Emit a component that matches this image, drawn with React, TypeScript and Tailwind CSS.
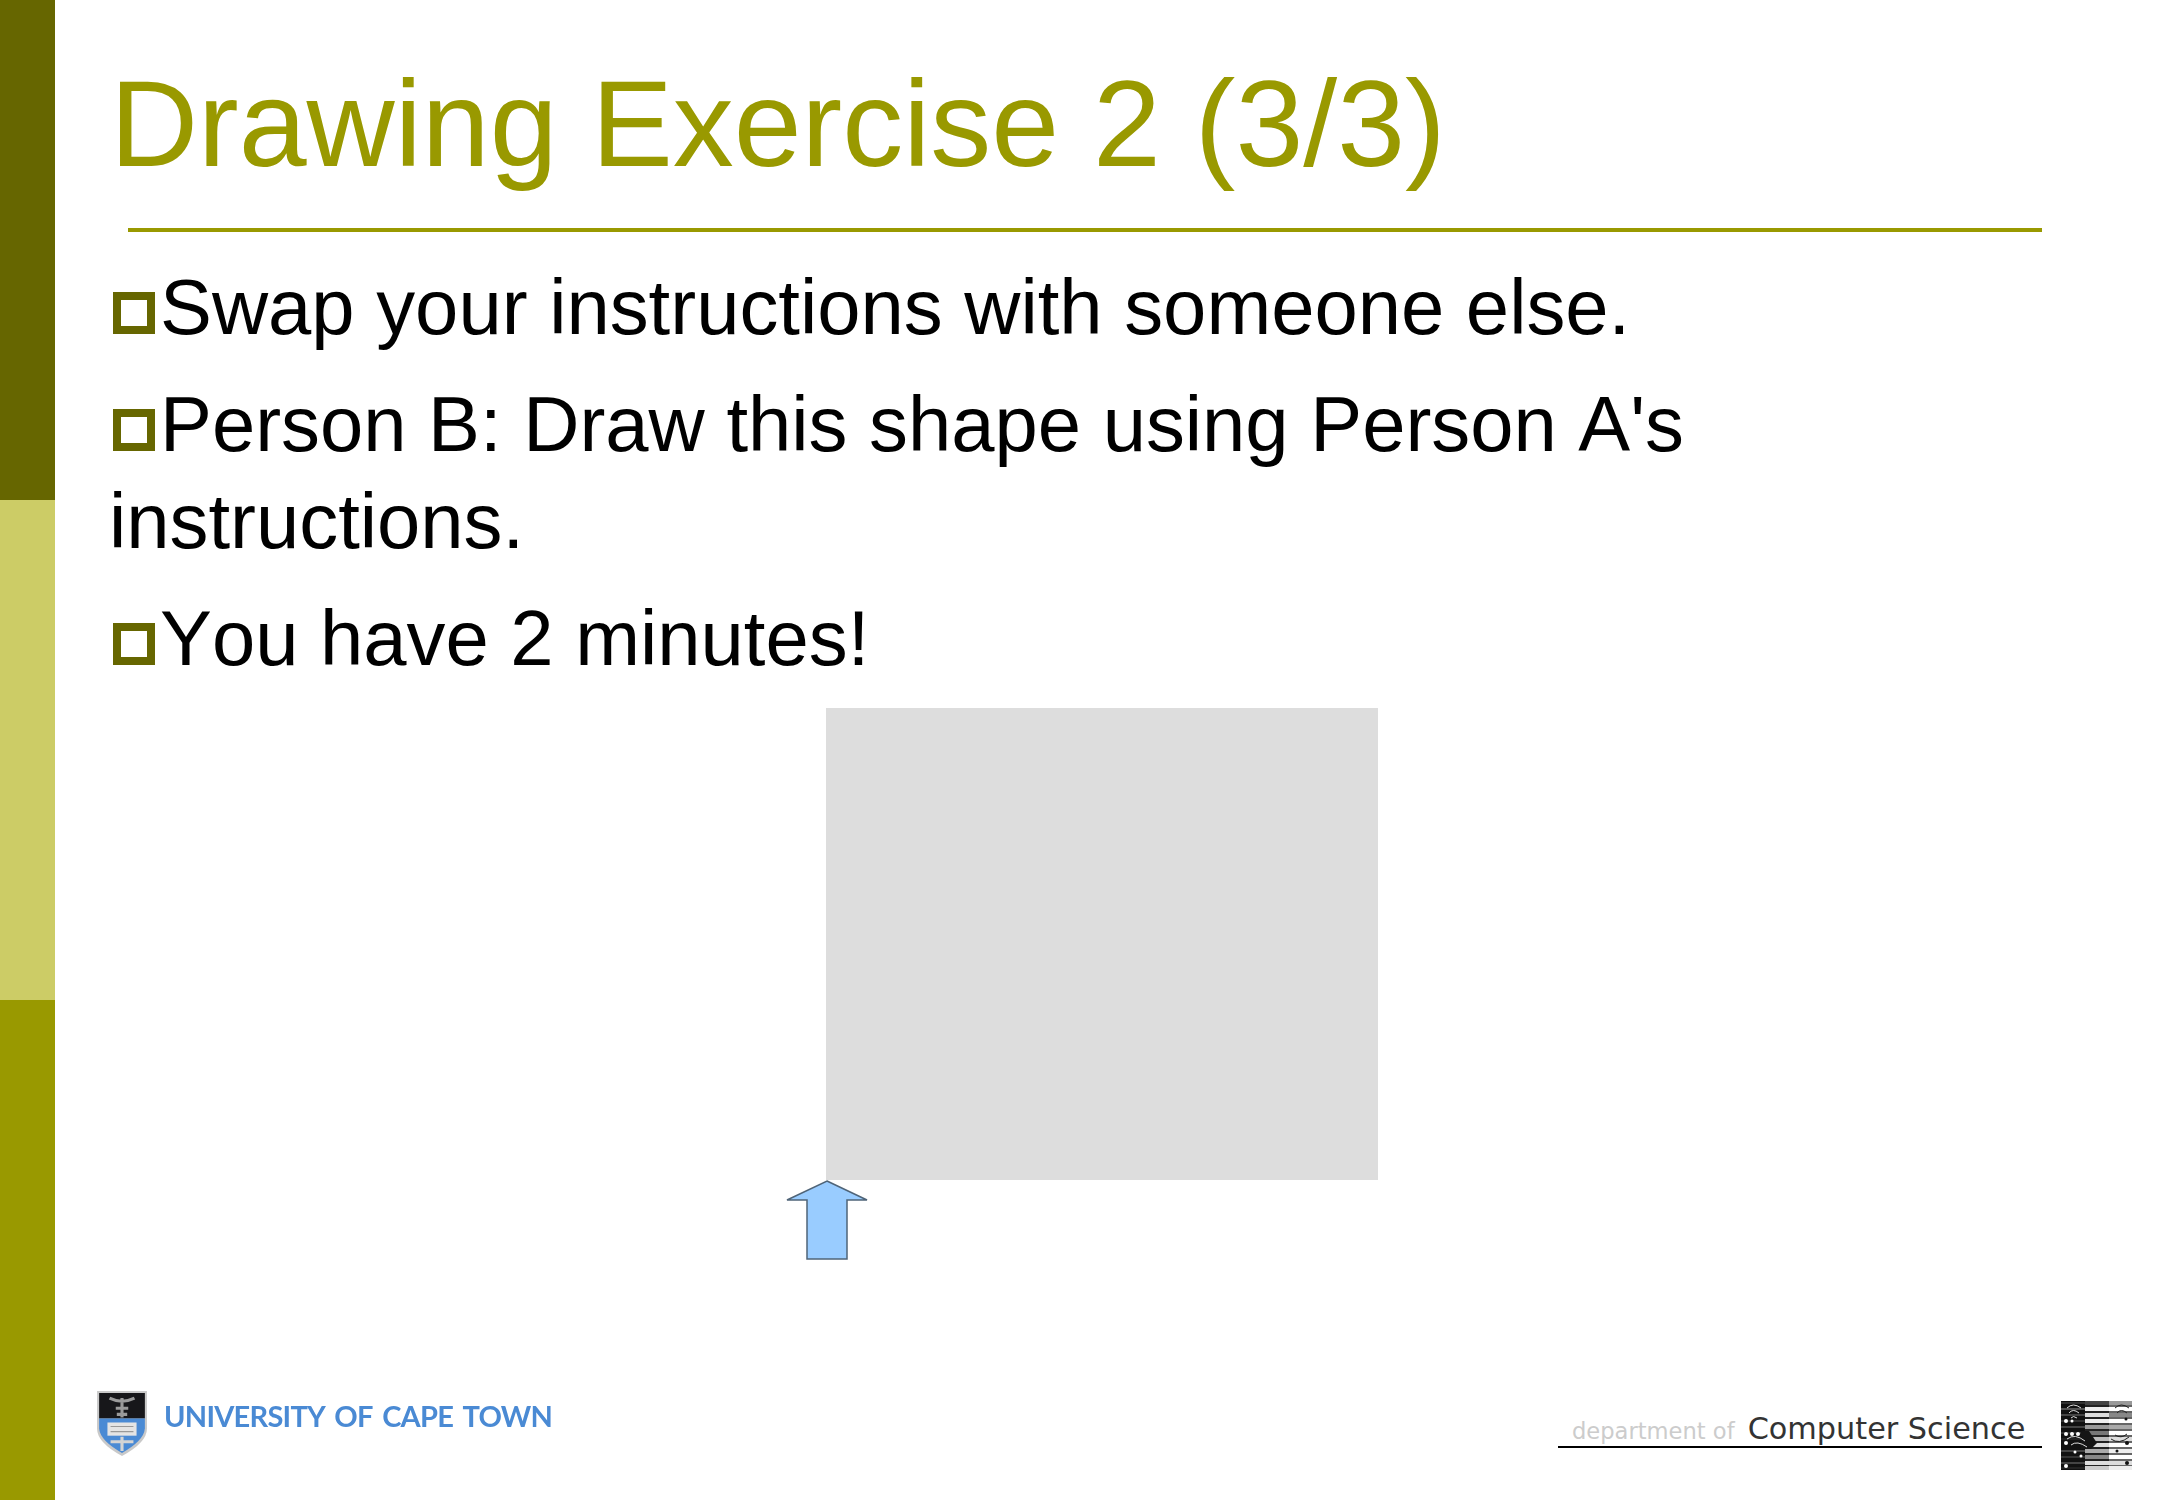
const bullets = [
	"Swap your instructions with someone else.",
	"Person B: Draw this shape using Person A's instructions.",
	"You have 2 minutes!",
]

// rows of the little circuit-board logo: [y, middle colour, right colour, left colour]
const stripes: [number, string, string, string][] = [
	[0, "#444", "#999", "#333"],
	[6, "#eee", "#fff", "#555"],
	[12, "#ddd", "#888", "#444"],
	[18, "#eee", "#fff", "#333"],
	[24, "#999", "#aaa", "#444"],
	[30, "#777", "#fff", "#333"],
	[36, "#bbb", "#ddd", "#222"],
	[42, "#ddd", "#fff", "#111"],
	[48, "#aaa", "#eee", "#444"],
	[54, "#888", "#fff", "#333"],
	[60, "#ddd", "#ddd", "#444"],
	[65, "#ccc", "#eee", "#222"],
]

function CircuitLogo() {
	return (
		<svg width="71" height="69" viewBox="0 0 71 69" className="block">
			<rect width="24" height="69" fill="#111" />
			<rect x="24" width="24" height="69" fill="#222" />
			<rect x="48" width="23" height="69" fill="#666" />
			{stripes.map(([y, mid, right, left]) => (
				<g key={y}>
					<rect x="0" y={y + 1} width="24" height="2" fill={left} />
					<rect x="24" y={y} width="24" height="4" fill={mid} />
					<rect x="48" y={y} width="23" height="4" fill={right} />
				</g>
			))}
			<path d="M20 30 H28 L36 42 L30 48 H20 Z" fill="#151515" />
			<g fill="none" stroke="#ddd" strokeWidth="1">
				<path d="M6 7 Q12 1 20 7 M8 12 Q12 7 18 12 M10 17 Q12 14 16 17" />
				<path d="M6 38 Q14 32 24 40 M10 44 Q16 39 26 46" />
			</g>
			<g fill="none" stroke="#222" strokeWidth="1">
				<path d="M54 7 Q60 1 68 7 M56 12 Q60 7 66 12" />
				<path d="M50 38 Q58 44 68 36 M54 34 Q60 38 66 33" />
			</g>
			<g fill="#fff">
				<circle cx="5" cy="20" r="2" />
				<circle cx="11" cy="20" r="1.5" />
				<circle cx="5" cy="33" r="2" />
				<circle cx="11" cy="33" r="2" />
				<circle cx="17" cy="33" r="2" />
				<circle cx="5" cy="42" r="2" />
				<circle cx="14" cy="51" r="1.5" />
				<circle cx="20" cy="55" r="1.5" />
				<circle cx="5" cy="65" r="2" />
			</g>
			<g fill="#111">
				<circle cx="65" cy="18" r="1.5" />
				<circle cx="66" cy="42" r="2" />
				<circle cx="56" cy="50" r="1.5" />
				<circle cx="66" cy="62" r="2" />
			</g>
		</svg>
	)
}

function Crest() {
	return (
		<svg width="52" height="67" viewBox="0 0 50 66" preserveAspectRatio="none" className="block blur-[0.7px]">
			<path d="M1 1 H49 V38 Q49 52 25 65 Q1 52 1 38 Z" fill="#c9c9c9" />
			<path d="M3 3 H47 V28 H3 Z" fill="#17171a" />
			<path d="M3 28 H47 V38 Q46 50 25 62 Q4 50 3 38 Z" fill="#4a8ad4" />
			<path d="M13 8 Q25 14 37 8 M25 8 V27 M19 18 H31 M20 24 H30" stroke="#9a9a9a" strokeWidth="3" fill="none" />
			<rect x="11" y="32" width="28" height="13" fill="#e4e4e4" />
			<path d="M14 36 H36 M14 41 H36" stroke="#999" strokeWidth="1" />
			<path d="M25 46 V60 M14 51 H36" stroke="#d4d4d4" strokeWidth="3" fill="none" />
		</svg>
	)
}

function App() {
	return (
		<div className="flex h-[1500px] w-full bg-white font-['Liberation_Sans',sans-serif] text-black">
			<div className="flex w-[55px] shrink-0 flex-col">
				<div className="flex-1 bg-[#666600]" />
				<div className="flex-1 bg-[#cccc66]" />
				<div className="flex-1 bg-[#999900]" />
			</div>

			<div className="flex min-w-0 flex-1 flex-col">
				<h1 className="ml-[55px] mt-[51px] text-[122px] leading-[146px] text-[#999900]">
					Drawing Exercise 2 (3/3)
				</h1>
				<div className="ml-[73px] mt-[31px] h-[4px] w-[1914px] bg-[#999900]" />

				<div className="ml-[54px] mt-[27px] w-[1700px] space-y-[20px] text-[77.8px] leading-[97px] [font-kerning:none]">
					{bullets.map((b) => (
						<p key={b}>
							<span className="ml-[4px] mr-[5px] inline-block size-[42px] border-[8px] border-[#666600] align-baseline" />
							{b}
						</p>
					))}
				</div>

				<div className="ml-[771px] mt-[21px] h-[472px] w-[552px] bg-[#dddddd]" />
				<svg width="82" height="81" viewBox="0 0 82 81" className="ml-[731px] block">
					<path d="M41 1 L81 20 H61 V79 H21 V20 H1 Z" fill="#99ccff" stroke="#4f6478" strokeWidth="1.5" />
				</svg>

				<div className="mt-auto flex items-start justify-between pb-[30px]">
					<div className="ml-[41px] mt-[-11px] flex items-center gap-[16px]">
						<Crest />
						<span className="mb-[16px] font-['Lato',sans-serif] text-[29px] font-bold leading-none tracking-[-0.75px] text-[#4a8ad4] blur-[0.5px] [word-spacing:4px]">
							UNIVERSITY OF CAPE TOWN
						</span>
					</div>
					<div className="mr-[35px] flex items-start gap-[19px]">
						<div className="flex h-[47px] w-[484px] items-end border-b-2 border-black pb-[2px] pl-[14px] font-['DejaVu_Sans',sans-serif] leading-none whitespace-nowrap">
							<div>
								<span className="text-[22.6px] text-[#cccccc]">department of</span>
								<span className="ml-[13px] text-[30.3px] text-[#333333]">Computer Science</span>
							</div>
						</div>
						<CircuitLogo />
					</div>
				</div>
			</div>
		</div>
	)
}

export default App
